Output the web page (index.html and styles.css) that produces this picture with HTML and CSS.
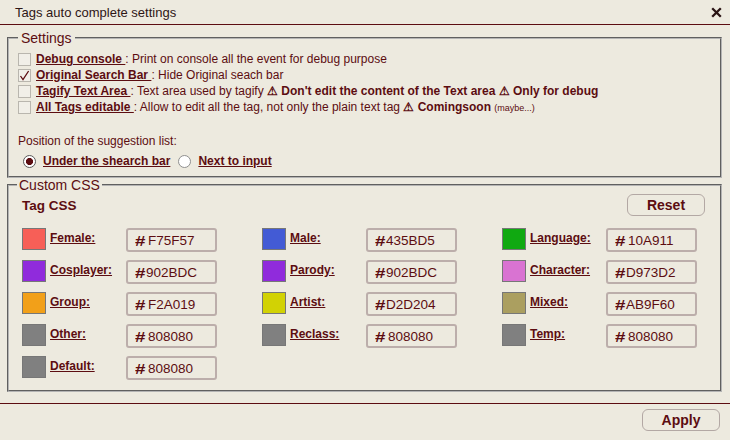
FILE: index.html
```html
<!DOCTYPE html>
<html>
<head>
<meta charset="utf-8">
<link rel="stylesheet" href="styles.css">
</head>
<body>
<div class="dialog">
  <div class="header">
    <span class="title">Tags auto complete settings</span>
    <span class="close"><svg width="11" height="11" viewBox="0 0 11 11"><path d="M1.2 1.2 L9.8 9.8 M9.8 1.2 L1.2 9.8" stroke="#2a1414" stroke-width="2.3" fill="none"/></svg></span>
  </div>

  <fieldset class="box settings">
    <legend>Settings</legend>
    <div class="opt"><span class="cb"></span><a class="lnk">Debug console </a><span>: Print on console all the event for debug purpose</span></div>
    <div class="opt"><span class="cb"><svg width="11" height="11" viewBox="0 0 11 11"><path d="M1.5 6 L4 9.6 L9.6 1" stroke="#5c0d11" stroke-width="1.3" fill="none"/></svg></span><a class="lnk">Original Search Bar </a><span>: Hide Original seach bar</span></div>
    <div class="opt"><span class="cb"></span><a class="lnk">Tagify Text Area </a><span>: Text area used by tagify <b>⚠ Don't edit the content of the Text area ⚠ Only for debug</b></span></div>
    <div class="opt"><span class="cb"></span><a class="lnk">All Tags editable </a><span>: Allow to edit all the tag, not only the plain text tag <b>⚠ Comingsoon</b> <small>(maybe...)</small></span></div>
    <div class="pos">Position of the suggestion list:</div>
    <div class="radios">
      <span class="rb on"></span><a class="lnk">Under the shearch bar</a>
      <span class="rb"></span><a class="lnk">Next to input</a>
    </div>
  </fieldset>

  <fieldset class="box custom">
    <legend>Custom CSS</legend>
    <div class="tagrow">
      <span class="tagcss">Tag CSS</span>
      <button class="btn">Reset</button>
    </div>
    <div class="grid">
      <div class="cell"><span class="sw" style="background:#F75F57"></span><a class="lbl">Female:</a><span class="inp"><span class="hash">#</span><span class="val sp">F75F57</span></span></div>
      <div class="cell"><span class="sw" style="background:#435BD5"></span><a class="lbl">Male:</a><span class="inp"><span class="hash">#</span><span class="val">435BD5</span></span></div>
      <div class="cell"><span class="sw" style="background:#10A911"></span><a class="lbl">Language:</a><span class="inp"><span class="hash">#</span><span class="val sp">10A911</span></span></div>

      <div class="cell"><span class="sw" style="background:#902BDC"></span><a class="lbl">Cosplayer:</a><span class="inp"><span class="hash">#</span><span class="val">902BDC</span></span></div>
      <div class="cell"><span class="sw" style="background:#902BDC"></span><a class="lbl">Parody:</a><span class="inp"><span class="hash">#</span><span class="val">902BDC</span></span></div>
      <div class="cell"><span class="sw" style="background:#D973D2"></span><a class="lbl">Character:</a><span class="inp"><span class="hash">#</span><span class="val">D973D2</span></span></div>

      <div class="cell"><span class="sw" style="background:#F2A019"></span><a class="lbl">Group:</a><span class="inp"><span class="hash">#</span><span class="val sp">F2A019</span></span></div>
      <div class="cell"><span class="sw" style="background:#D2D204"></span><a class="lbl">Artist:</a><span class="inp"><span class="hash">#</span><span class="val">D2D204</span></span></div>
      <div class="cell"><span class="sw" style="background:#AB9F60"></span><a class="lbl">Mixed:</a><span class="inp"><span class="hash">#</span><span class="val">AB9F60</span></span></div>

      <div class="cell"><span class="sw" style="background:#808080"></span><a class="lbl">Other:</a><span class="inp"><span class="hash">#</span><span class="val sp">808080</span></span></div>
      <div class="cell"><span class="sw" style="background:#808080"></span><a class="lbl">Reclass:</a><span class="inp"><span class="hash">#</span><span class="val sp">808080</span></span></div>
      <div class="cell"><span class="sw" style="background:#808080"></span><a class="lbl">Temp:</a><span class="inp"><span class="hash">#</span><span class="val sp">808080</span></span></div>

      <div class="cell"><span class="sw" style="background:#808080"></span><a class="lbl">Default:</a><span class="inp"><span class="hash">#</span><span class="val sp">808080</span></span></div>
    </div>
  </fieldset>

  <div class="footer">
    <button class="btn">Apply</button>
  </div>
</div>
</body>
</html>
```

FILE: styles.css
```css
html, body {
  margin: 0;
  padding: 0;
  background: #edeadf;
}
body {
  font-family: "Liberation Sans", Arial, sans-serif;
  color: #5c0d11;
  font-size: 12px;
  width: 730px;
  height: 440px;
  overflow: hidden;
}
.header {
  height: 24px;
  border-bottom: 1px solid #5c0d11;
  display: flex;
  align-items: center;
  justify-content: space-between;
  padding: 0 8px 0 15px;
}
.title {
  font-size: 13px;
  color: #2e1616;
}
.close {
  display: flex;
}
.box {
  margin: 0 8px 0 7px;
  border: 2px groove #b4b4b4;
  padding: 6px 9px 7px 9px;
}
.box legend {
  font-size: 14px;
  line-height: 14px;
  padding: 0 3px;
}
.settings {
  margin-top: 6px;
}
.opt {
  display: flex;
  align-items: center;
  height: 16px;
  white-space: nowrap;
}
.cb {
  width: 13px;
  height: 13px;
  box-sizing: border-box;
  border: 1px solid #b9b6ae;
  background: #f1efe8;
  margin-right: 5px;
  display: flex;
  align-items: center;
  justify-content: center;
}
.lnk {
  font-weight: bold;
  text-decoration: underline;
  white-space: pre;
}
small {
  font-size: 9px;
}
.pos {
  margin-top: 18px;
  line-height: 16px;
}
.radios {
  display: flex;
  align-items: center;
  height: 16px;
  margin-top: 4px;
  padding-left: 5px;
}
.rb {
  width: 13px;
  height: 13px;
  box-sizing: border-box;
  border-radius: 50%;
  border: 1px solid #8f8f8f;
  background: #fff;
  margin-right: 7px;
}
.rb + .lnk {
  margin-right: 8px;
}
.rb.on {
  border: 1px solid #5a5a5a;
  background: radial-gradient(circle, #5c0d11 0 3.3px, #fff 3.8px);
}
.custom {
  padding: 2px 15px 10px 13px;
}
.custom legend {
  padding: 0 2px;
  margin-left: -5px;
}
.tagrow {
  display: flex;
  align-items: center;
  justify-content: space-between;
  height: 22px;
}
.tagcss {
  font-weight: bold;
  font-size: 13.5px;
}
.btn {
  width: 78px;
  height: 22px;
  border: 1px solid #b3a8a4;
  border-radius: 6px;
  background: #edeadf;
  font-family: "Liberation Sans", Arial, sans-serif;
  font-weight: bold;
  font-size: 14px;
  color: #5c0d11;
  padding: 0;
}
.grid {
  margin-top: 12px;
  display: grid;
  grid-template-columns: 240px 240px auto;
  row-gap: 8px;
}
.cell {
  display: flex;
  align-items: flex-start;
  height: 24px;
}
.sw {
  width: 24px;
  height: 22px;
  box-sizing: border-box;
  border: 1px solid #777;
  margin-right: 4px;
}
.lbl {
  width: 76px;
  font-weight: bold;
  text-decoration: underline;
  line-height: 20px;
}
.inp {
  width: 91px;
  height: 24px;
  box-sizing: border-box;
  border: 2px solid #bcaeab;
  border-radius: 3px;
  display: flex;
  align-items: center;
  padding-left: 7px;
  font-size: 13.5px;
}
.hash {
  display: inline-block;
  width: 11px;
  font-weight: bold;
  font-size: 15px;
  transform: scaleX(1.25);
  transform-origin: left center;
}
.val.sp {
  margin-left: 2px;
}
.footer {
  margin-top: 11px;
  border-top: 1px solid #5c0d11;
  display: flex;
  justify-content: flex-end;
  padding: 5px 10px 0 0;
}
```
